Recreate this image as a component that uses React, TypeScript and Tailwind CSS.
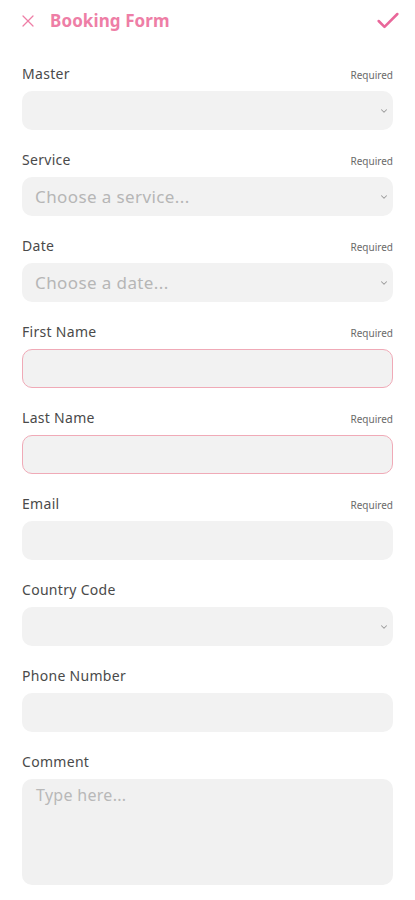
import { X, Check, ChevronDown } from 'lucide-react'

type FieldProps = {
  label: string
  required?: boolean
  kind?: 'select' | 'input' | 'textarea'
  placeholder?: string
  error?: boolean
}

function Field({ label, required, kind = 'input', placeholder, error }: FieldProps) {
  return (
    <div className="flex flex-col">
      <div className="flex items-end justify-between h-[26px] pb-[5px]">
        <span className="text-[14px] leading-none text-[#4a4a4a] tracking-[0.3px]">{label}</span>
        {required && <span className="text-[10px] leading-none text-[#6a6a6a] pb-[1px]">Required</span>}
      </div>
      {kind === 'textarea' ? (
        <div className="mt-[5px] h-[106px] rounded-[10px] bg-[#f1f1f1] px-[14px] pt-[8px] text-[16px] leading-none text-[#b8b8b8] tracking-[0.3px]">
          {placeholder}
        </div>
      ) : (
        <div
          className={
            error
              ? 'mt-[5px] h-[39px] rounded-[10px] bg-[#f2f2f2] border border-[#f0aab7] flex items-center pl-[12px] pr-[3px]'
              : 'mt-[5px] h-[39px] rounded-[10px] bg-[#f2f2f2] flex items-center pl-[13px] pr-[4px]'
          }
        >
          <span className="flex-1 text-[17px] leading-none text-[#b6b6b6] tracking-[0.4px]">{placeholder}</span>
          {kind === 'select' && <ChevronDown size={10} strokeWidth={2.5} className="text-[#9a9a9a]" />}
        </div>
      )}
    </div>
  )
}

export default function App() {
  return (
    <div className="w-[415px] min-h-[900px] bg-white font-['Noto_Sans',sans-serif]">
      <div className="flex items-center h-[42px] pl-[18px] pr-[13px]">
        <X size={20} strokeWidth={1.5} className="text-[#ee7ea6]" />
        <h1 className="ml-[12px] text-[17px] font-bold text-[#ee7ea6] tracking-[0.1px]">Booking Form</h1>
        <Check size={28} strokeWidth={2.2} className="ml-auto text-[#e9679a]" />
      </div>
      <div className="flex flex-col gap-[16px] px-[22px] pt-[18px]">
        <Field label="Master" required kind="select" />
        <Field label="Service" required kind="select" placeholder="Choose a service..." />
        <Field label="Date" required kind="select" placeholder="Choose a date..." />
        <Field label="First Name" required error />
        <Field label="Last Name" required error />
        <Field label="Email" required />
        <Field label="Country Code" kind="select" />
        <Field label="Phone Number" />
        <Field label="Comment" kind="textarea" placeholder="Type here..." />
      </div>
    </div>
  )
}
